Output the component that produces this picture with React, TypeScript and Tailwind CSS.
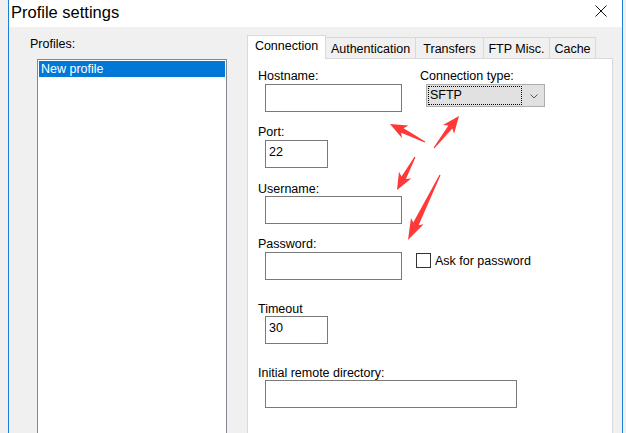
type Pt = [number, number];

function arrowPoints(tail: Pt, tip: Pt, headLen: number, headHalf: number, shaftHalf: number) {
  const dx = tip[0] - tail[0];
  const dy = tip[1] - tail[1];
  const len = Math.hypot(dx, dy);
  const ux = dx / len;
  const uy = dy / len;
  const nx = -uy;
  const ny = ux;
  const bx = tip[0] - ux * headLen;
  const by = tip[1] - uy * headLen;
  const wx = bx - ux * 3;
  const wy = by - uy * 3;
  const pts: Pt[] = [
    [tail[0] + nx * 0.6, tail[1] + ny * 0.6],
    [bx + nx * shaftHalf, by + ny * shaftHalf],
    [wx + nx * headHalf, wy + ny * headHalf],
    tip,
    [wx - nx * headHalf, wy - ny * headHalf],
    [bx - nx * shaftHalf, by - ny * shaftHalf],
    [tail[0] - nx * 0.6, tail[1] - ny * 0.6],
  ];
  return pts.map((p) => p.join(",")).join(" ");
}

const arrows = [
  arrowPoints([425, 142], [390, 124], 14, 7, 2.5),
  arrowPoints([434, 148], [459, 116], 14, 7, 2.5),
  arrowPoints([415, 157], [397, 190], 14, 7, 2.5),
  arrowPoints([440, 175], [408, 240], 18, 7, 3),
];

const tabs = [
  { name: "Authentication", w: "w-[91px]" },
  { name: "Transfers", w: "w-[69px]" },
  { name: "FTP Misc.", w: "w-[67px]" },
  { name: "Cache", w: "w-[47px]" },
];

function TextBox({ w, value }: { w: string; value?: string }) {
  return (
    <div className={`${w} h-[28px] ml-[7px] border border-[#7a7a7a] bg-white pl-[3px] pt-[4px] leading-[14px]`}>
      {value}
    </div>
  );
}

export default function App() {
  return (
    <div className="relative w-[626px] h-[433px] bg-[#f0f0f0] flex overflow-hidden text-[12.5px] text-black font-['Liberation_Sans',Arial,sans-serif]">
      <div className="w-[8px] shrink-0" />
      <div className="w-[615px] shrink-0 border-x border-[#1a7fd6] flex flex-col">
        <div className="h-[27px] bg-white flex items-start">
          <span className="pl-[2px] pt-[2px] text-[16.5px] leading-[20px]">Profile settings</span>
          <svg className="ml-auto mt-[5px] mr-[15px]" width="12" height="12" viewBox="0 0 12 12">
            <path d="M0.5 0.5 L11.5 11.5 M11.5 0.5 L0.5 11.5" stroke="#111" strokeWidth="1" />
          </svg>
        </div>

        <div className="flex-1 min-h-0 flex overflow-hidden">
          <div className="w-[238px] shrink-0 flex flex-col pt-[10px]">
            <span className="pl-[21px] leading-[14px]">Profiles:</span>
            <div className="ml-[28px] mt-[8px] w-[190px] h-[400px] shrink-0 border border-[#828790] bg-white p-[1px]">
              <div className="h-[16px] bg-[#0078d7] text-white pl-[2px] leading-[16px]">New profile</div>
            </div>
          </div>

          <div className="w-[375px] shrink-0 flex flex-col pt-[8px]">
            <div className="flex items-end h-[23px] shrink-0">
              <div className="relative z-10 w-[79px] h-[24px] -mb-px border border-b-0 border-[#d9d9d9] bg-white text-center pt-[3px] leading-[14px]">
                Connection
              </div>
              {tabs.map((t) => (
                <div
                  key={t.name}
                  className={`${t.w} h-[21px] -ml-px border border-b-0 border-[#d9d9d9] bg-[#f0f0f0] text-center pt-[4px] leading-[14px]`}
                >
                  {t.name}
                </div>
              ))}
            </div>

            <div className="w-[366px] h-[400px] shrink-0 border border-[#d9d9d9] bg-white pl-[10px] pt-[10px] flex flex-col leading-[14px]">
              <div className="flex">
                <div className="w-[162px] flex flex-col">
                  <span>Hostname:</span>
                  <div className="mt-[1px]">
                    <TextBox w="w-[137px]" />
                  </div>
                </div>
                <div className="flex flex-col">
                  <span>Connection type:</span>
                  <div className="mt-[1px] ml-[6px] w-[119px] h-[23px] border border-[#adadad] bg-[#e1e1e1] flex items-start p-px">
                    <div className="w-[94px] h-[19px] border border-dotted border-black pl-[1px] pt-[1px] leading-[14px]">
                      SFTP
                    </div>
                    <svg className="ml-[8px] mt-[8px]" width="8" height="5" viewBox="0 0 8 5">
                      <path d="M0.5 0.5 L4 4 L7.5 0.5" stroke="#555" strokeWidth="1" fill="none" />
                    </svg>
                  </div>
                </div>
              </div>

              <span className="mt-[13px]">Port:</span>
              <div className="mt-[1px]">
                <TextBox w="w-[63px]" value="22" />
              </div>

              <span className="mt-[14px]">Username:</span>
              <TextBox w="w-[137px]" />

              <span className="mt-[13px]">Password:</span>
              <div className="mt-[1px] flex items-start">
                <TextBox w="w-[137px]" />
                <div className="ml-[14px] mt-[1px] w-[15px] h-[15px] border border-[#333] bg-white" />
                <span className="ml-[4px] mt-[2px]">Ask for password</span>
              </div>

              <span className="mt-[22px]">Timeout</span>
              <TextBox w="w-[63px]" value="30" />

              <span className="mt-[22px]">Initial remote directory:</span>
              <TextBox w="w-[252px]" />
            </div>
          </div>
        </div>
      </div>

      <svg className="absolute inset-0 pointer-events-none" width="626" height="433" viewBox="0 0 626 433">
        {arrows.map((p, i) => (
          <polygon key={i} points={p} fill="#ff3838" />
        ))}
      </svg>
    </div>
  );
}
